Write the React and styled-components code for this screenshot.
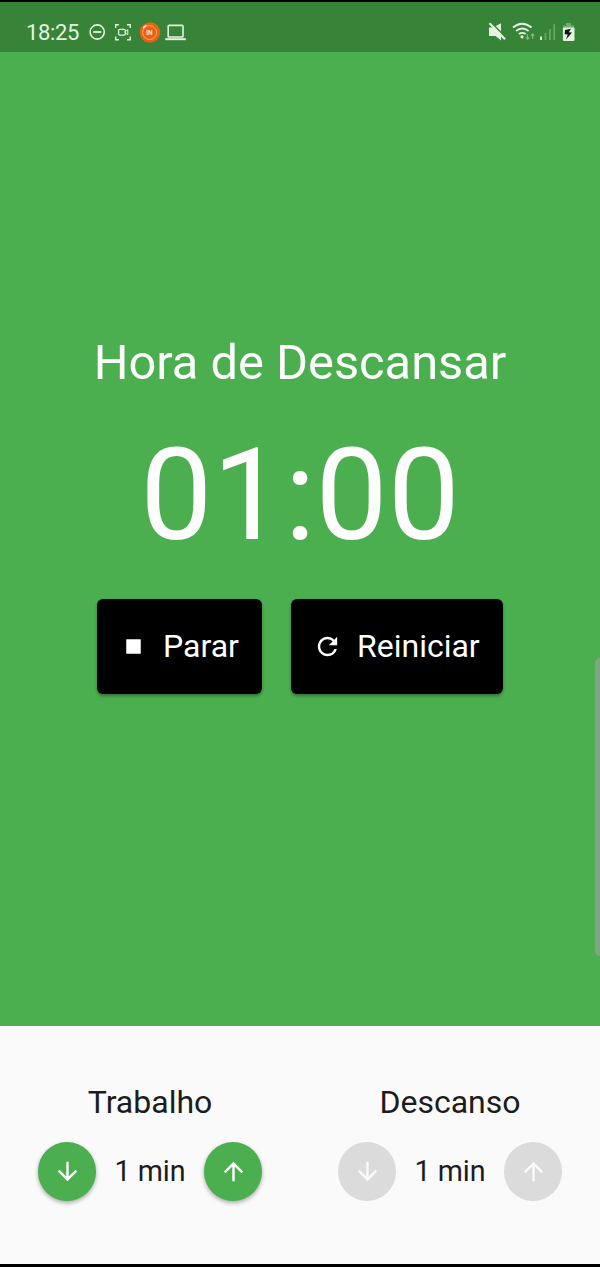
import React from "react";
import styled, { createGlobalStyle } from "styled-components";
import { MdStop, MdRefresh, MdArrowDownward, MdArrowUpward } from "react-icons/md";

const GlobalStyle = createGlobalStyle`
  *, *::before, *::after { box-sizing: border-box; }
  body { margin: 0; background: #000; font-family: Roboto, "Liberation Sans", sans-serif; }
`;

const Screen = styled.main`
  position: relative;
  display: flex;
  flex-direction: column;
  width: 600px;
  height: 1267px;
  padding: 2px 0 3px;
  overflow: hidden;
  background: #000;
`;

const StatusBar = styled.header`
  display: flex;
  justify-content: space-between;
  flex: 0 0 50px;
  padding: 10px 24px 0 26px;
  background: #378338;
  color: #e3f5e0;
`;

const StatusGroup = styled.div`
  display: flex;
  align-items: center;
  height: 40px;
`;

const Clock = styled.time`
  width: 62px;
  padding-top: 2px;
  font-size: 22px;
  line-height: 40px;
  letter-spacing: -0.35px;
`;

const StatusSvg = styled.svg`
  display: block;
  flex: none;
  overflow: visible;
`;

const Stage = styled.section`
  display: flex;
  flex-direction: column;
  align-items: center;
  flex: 0 0 974px;
  padding-top: 282px;
  background: #4bae4f;
  color: #fcfdfc;
`;

const Title = styled.h1`
  margin: 0;
  font-size: 48.8px;
  font-weight: 400;
  line-height: 58px;
  white-space: nowrap;
`;

const Timer = styled.div`
  margin-top: 28px;
  font-size: 128.4px;
  line-height: 151px;
`;

const Actions = styled.div`
  display: flex;
  gap: 29px;
  margin-top: 28px;
`;

const ActionButton = styled.button`
  display: flex;
  align-items: center;
  gap: 15px;
  width: ${(p) => p.$width}px;
  height: 95px;
  padding: 0 0 1px 22px;
  border: 0;
  border-radius: 6px;
  background: #000;
  color: #fff;
  font: 400 32px/38px Roboto, "Liberation Sans", sans-serif;
  box-shadow: 0 2px 3px rgba(0, 0, 0, 0.32);

  svg { flex: none; width: 29px; height: 29px; }
`;

const Settings = styled.section`
  display: grid;
  grid-template-columns: 1fr 1fr;
  flex: 1;
  padding-top: 57px;
  background: #fafafb;
  color: #1c1c1c;
`;

const Setting = styled.div`
  display: flex;
  flex-direction: column;
  align-items: center;
`;

const SettingLabel = styled.h2`
  margin: 0;
  font-size: 32px;
  font-weight: 400;
  line-height: 38px;
`;

const Stepper = styled.div`
  display: flex;
  align-items: center;
  justify-content: space-between;
  width: 224.5px;
  margin-top: 21px;
`;

const StepButton = styled.button`
  display: grid;
  place-items: center;
  width: 58.5px;
  height: 58.5px;
  padding: 0;
  border: 0;
  border-radius: 50%;
  background: #4bae4f;
  color: #fff;
  box-shadow: 0 2px 4px rgba(0, 0, 0, 0.32);

  &:disabled {
    background: #dcdbdc;
    color: #fafafa;
    box-shadow: none;
  }

  svg { width: 29px; height: 29px; }
`;

const StepValue = styled.span`
  padding-bottom: 0.5px;
  font-size: 28.7px;
  line-height: 36px;
  white-space: nowrap;
`;

const EdgeHandle = styled.div`
  position: absolute;
  top: 658px;
  right: 0;
  width: 5px;
  height: 298px;
  border-radius: 5px 0 0 5px;
  background: #7fa683;
`;

const LeftStatusIcons = () => (
  <StatusSvg width="102" height="22" viewBox="88 21 102 22" fill="none" stroke="currentColor">
    <circle cx="97.2" cy="32" r="7.1" strokeWidth="1.6" />
    <path d="M93.2 32h8" strokeWidth="1.8" />
    <path d="M115.7 28v-3.2h3.2M127 24.8h3.2V28M130.2 36.5v3.2H127M118.9 39.7h-3.2v-3.2" strokeWidth="1.4" />
    <rect x="118.6" y="29.3" width="6.6" height="5.8" rx="1" strokeWidth="1.3" />
    <path d="M125.4 31.4l2.4-1.7v5l-2.4-1.7z" strokeWidth="1" />
    <circle cx="150" cy="32.5" r="10.2" fill="#ee5f12" stroke="none" />
    <circle cx="149.6" cy="32.5" r="7" stroke="#f9ad79" strokeWidth="0.9" />
    <path d="M143.2 28.3q1.1-2.1 3.2-3.1" stroke="#ffe3cf" strokeWidth="1.4" />
    <text x="149.4" y="34.9" textAnchor="middle" fill="#dcefc4" stroke="none" fontFamily="Roboto, sans-serif" fontSize="6.5" fontWeight="700">IN</text>
    <rect x="168.2" y="25.4" width="14.8" height="11.6" rx="0.8" strokeWidth="1.6" />
    <path d="M165.3 39.2h20.5" strokeWidth="2" />
  </StatusSvg>
);

const RightStatusIcons = () => (
  <StatusSvg width="90" height="24" viewBox="486 20 90 24" fill="none" stroke="currentColor">
    <path d="M489 27.5h4.2l7.8-4.3v17.3l-5.5-4.5H489z" fill="currentColor" stroke="none" />
    <path d="M491.5 22.8l15 15.3" stroke="#378338" strokeWidth="1.6" />
    <path d="M489.5 23.3l15.6 16" strokeWidth="2.2" />
    <path d="M513 27.6q9-7.5 18.6 0M516 31q6.4-5 12.6 0M518.9 34.1q3.4-2.5 6.7 0" strokeWidth="1.9" />
    <circle cx="522" cy="36.8" r="1.6" fill="currentColor" stroke="none" />
    <path d="M527.5 34v5M525.7 37.3l1.8 1.9 1.8-1.9M532.6 39v-5M530.8 35.7l1.8-1.9 1.8 1.9" stroke="#85b982" strokeWidth="1.2" />
    <path d="M541 36.5V40" strokeWidth="2" />
    <path d="M545.5 33v7M549.9 29v11M554.2 24.3V40" stroke="#69a568" strokeWidth="1.8" />
    <path d="M563 28v-2.5h3V23h5v2.5h3V28z" fill="#72ab6f" stroke="none" />
    <rect x="562.9" y="27.5" width="11.6" height="13.4" rx="1" fill="currentColor" stroke="none" />
    <path d="M571 28.8l-6 1.2-.3 4.3 3 .3-1.6 4.8 5.9-6.8-3.2-.3z" fill="#0d180d" stroke="none" />
  </StatusSvg>
);

function DurationSetting({ label, disabled }) {
  return (
    <Setting>
      <SettingLabel>{label}</SettingLabel>
      <Stepper>
        <StepButton disabled={disabled} aria-label="Diminuir"><MdArrowDownward /></StepButton>
        <StepValue>1 min</StepValue>
        <StepButton disabled={disabled} aria-label="Aumentar"><MdArrowUpward /></StepButton>
      </Stepper>
    </Setting>
  );
}

export default function App() {
  return (
    <>
      <GlobalStyle />
      <Screen>
        <StatusBar>
          <StatusGroup><Clock>18:25</Clock><LeftStatusIcons /></StatusGroup>
          <StatusGroup><RightStatusIcons /></StatusGroup>
        </StatusBar>
        <Stage>
          <Title>Hora de Descansar</Title>
          <Timer>01:00</Timer>
          <Actions>
            <ActionButton $width={165}><MdStop />Parar</ActionButton>
            <ActionButton $width={212}><MdRefresh />Reiniciar</ActionButton>
          </Actions>
        </Stage>
        <Settings>
          <DurationSetting label="Trabalho" />
          <DurationSetting label="Descanso" disabled />
        </Settings>
        <EdgeHandle />
      </Screen>
    </>
  );
}
